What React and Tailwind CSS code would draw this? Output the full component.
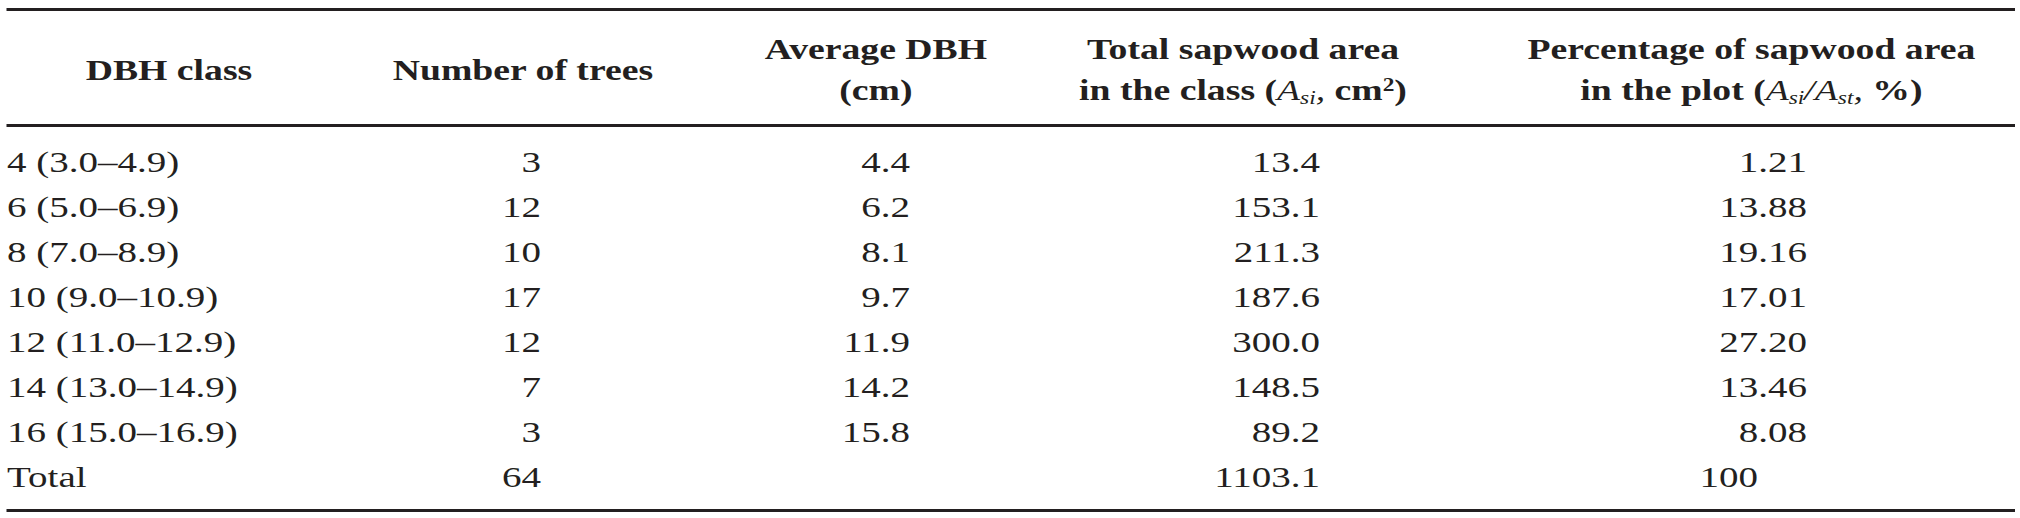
const cols = "grid grid-cols-[249.2px_295.4px_247.6px_317.2px_1fr]";

const rows = [
  ["4 (3.0–4.9)", "3", "4.4", "13.4", "1.21"],
  ["6 (5.0–6.9)", "12", "6.2", "153.1", "13.88"],
  ["8 (7.0–8.9)", "10", "8.1", "211.3", "19.16"],
  ["10 (9.0–10.9)", "17", "9.7", "187.6", "17.01"],
  ["12 (11.0–12.9)", "12", "11.9", "300.0", "27.20"],
  ["14 (13.0–14.9)", "7", "14.2", "148.5", "13.46"],
  ["16 (15.0–16.9)", "3", "15.8", "89.2", "8.08"],
];

function HeadCell({ className = "", children }) {
  return (
    <div className={`flex flex-col items-center justify-center whitespace-nowrap ${className}`}>
      {children}
    </div>
  );
}

function Sub({ children }) {
  return <sub className="text-[0.62em]">{children}</sub>;
}

export default function App() {
  return (
    <div className="w-[2020px] h-[518px] overflow-hidden bg-white">
      {/* the source table is stretched wide, so lay it out narrow and scale it */}
      <div className="w-[1554px] origin-left scale-x-[1.3] pt-[8px] pl-[5.4px] pr-[4px] font-['Liberation_Serif',serif] text-[#231f20]">
        <div className="border-t-[3px] border-b-[3px] border-[#231f20]">
          <div className={`${cols} h-[113px] pt-[4px] text-[29px] leading-[41px] font-bold`}>
            <HeadCell>
              <span className="pt-[2px]">DBH class</span>
            </HeadCell>
            <HeadCell>
              <span className="pt-[2px]">Number of trees</span>
            </HeadCell>
            <HeadCell>
              <span>Average DBH</span>
              <span>(cm)</span>
            </HeadCell>
            <HeadCell>
              <span>Total sapwood area</span>
              <span>
                in the class (
                <span className="italic font-normal">
                  A<Sub>si</Sub>,
                </span>{" "}
                cm<sup className="text-[0.62em]">2</sup>)
              </span>
            </HeadCell>
            <HeadCell className="pl-[29.8px]">
              <span>Percentage of sapwood area</span>
              <span>
                in the plot (
                <span className="italic font-normal">
                  A<Sub>si</Sub>/A<Sub>st</Sub>,
                </span>{" "}
                %)
              </span>
            </HeadCell>
          </div>
        </div>

        <div className="pt-[12px] pb-[10px] border-b-[3px] border-[#231f20] text-[30px] leading-[45px]">
          {rows.map((r, i) => (
            <div key={i} className={cols}>
              <div className="whitespace-nowrap">{r[0]}</div>
              <div className="text-right pr-[133.8px]">{r[1]}</div>
              <div className="text-right pr-[97.6px]">{r[2]}</div>
              <div className="text-right pr-[99.4px]">{r[3]}</div>
              <div className="text-right pr-[160px]">{r[4]}</div>
            </div>
          ))}
          <div className={cols}>
            <div>Total</div>
            <div className="text-right pr-[133.8px]">64</div>
            <div />
            <div className="text-right pr-[99.4px]">1103.1</div>
            <div className="text-right pr-[197.7px]">100</div>
          </div>
        </div>
      </div>
    </div>
  );
}
